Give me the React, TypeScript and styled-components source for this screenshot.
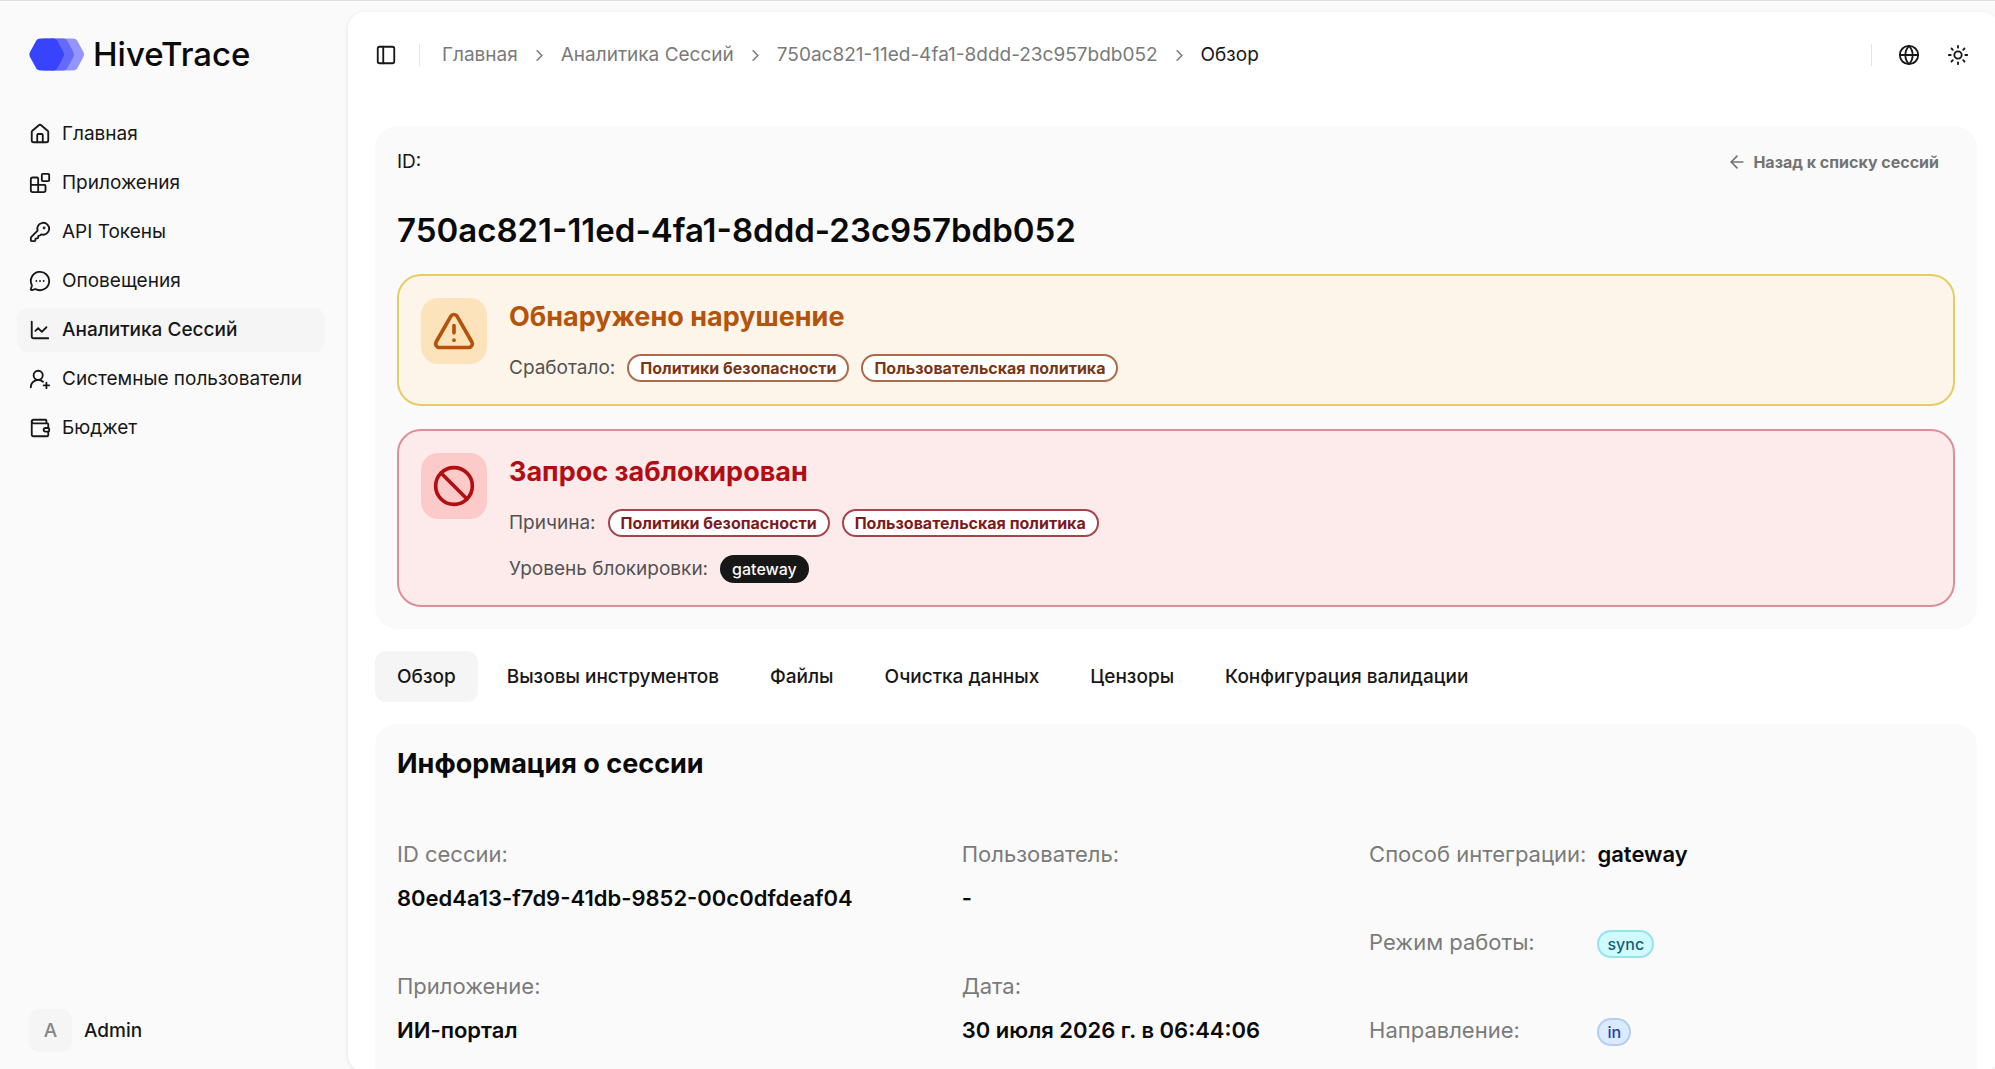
import React from "react";
import styled, { createGlobalStyle } from "styled-components";
import {
  ArrowLeft,
  Ban,
  Blocks,
  ChartLine,
  ChevronRight,
  Globe,
  House,
  KeyRound,
  MessageCircleMore,
  PanelLeft,
  Sun,
  TriangleAlert,
  UserRoundPlus,
  Wallet,
} from "lucide-react";

const GlobalStyle = createGlobalStyle`
  *, *::before, *::after { box-sizing: border-box; }
  body {
    margin: 0;
    background: #fafafa;
    color: #171717;
    font-family: Inter, "Noto Sans", sans-serif;
    font-size: 19px;
    line-height: 28px;
  }
  h1, h2, p, ul, ol, dl, dd { margin: 0; padding: 0; }
  ul, ol { list-style: none; }
  a { color: inherit; text-decoration: none; }
  button { font: inherit; color: inherit; background: none; border: 0; padding: 0; cursor: pointer; }
  svg { flex-shrink: 0; }
`;

const Shell = styled.div`
  display: flex;
  height: 100vh;
  overflow: hidden;
  border-top: 1px solid #dedede;
`;

const Sidebar = styled.aside`
  display: flex;
  flex-direction: column;
  flex: 0 0 348px;
  padding: 31px 23px 17px 17px;
`;

const Brand = styled.a`
  display: flex;
  align-items: center;
  gap: 9px;
  height: 44px;
  margin: 0 12px 36px;
  color: #0a0a0a;
  font-size: 33px;
  font-weight: 500;
  line-height: 44px;
`;

const NavList = styled.ul`
  display: flex;
  flex-direction: column;
  gap: 5px;
`;

const NavLink = styled.a<{ $active?: boolean }>`
  display: flex;
  align-items: center;
  gap: 11px;
  height: 44px;
  padding: 0 12px;
  border-radius: 11px;
  white-space: nowrap;
  font-weight: ${(p) => (p.$active ? 500 : 400)};
  background: ${(p) => (p.$active ? "#f5f5f5" : "transparent")};
`;

const Account = styled.button`
  display: flex;
  align-items: center;
  gap: 12px;
  margin-top: auto;
  padding: 0 12px;
  font-weight: 500;
`;

const Avatar = styled.span`
  display: grid;
  place-items: center;
  width: 43px;
  height: 43px;
  border-radius: 11px;
  background: #f5f5f5;
  color: #858585;
`;

const Panel = styled.main`
  flex: 1;
  min-width: 0;
  height: calc(100vh - 9px);
  margin: 11px -4px 0 0;
  overflow: hidden;
  border-radius: 17px;
  background: #fff;
  box-shadow: 0 1px 4px rgba(0, 0, 0, 0.1);
`;

const TopBar = styled.header`
  display: flex;
  align-items: center;
  height: 86px;
  padding: 0 17px 0 27px;
`;

const IconButton = styled.button`
  display: grid;
  place-items: center;
  width: 49px;
  height: 44px;
`;

const ToggleButton = styled(IconButton)`
  width: 22px;
`;

const Divider = styled.span`
  width: 1px;
  height: 22px;
  background: #e5e5e5;
`;

const Breadcrumb = styled.nav`
  display: flex;
  align-items: center;
  gap: 22px;
  margin-left: 22px;
`;

const Crumbs = styled.ol`
  display: flex;
  align-items: center;
  gap: 12px;
  color: #7a7a7a;
`;

const Crumb = styled.li<{ $current?: boolean }>`
  display: flex;
  align-items: center;
  gap: 12px;
  color: ${(p) => (p.$current ? "#171717" : "inherit")};
`;

const Actions = styled.div`
  display: flex;
  align-items: center;
  margin-left: auto;
`;

const GlobeButton = styled(IconButton)`
  margin-left: 12px;
`;

const Content = styled.div`
  display: flex;
  flex-direction: column;
  gap: 22px;
  padding: 28px 22px 0 27px;
`;

const Card = styled.section`
  padding: 22px;
  border-radius: 22px;
  background: #fafafa;
`;

const InfoCard = styled(Card)`
  padding-bottom: 66px;
`;

const CardTop = styled.div`
  display: flex;
  justify-content: space-between;
  align-items: center;
  height: 28px;
  padding-right: 16px;
`;

const BackLink = styled.a`
  display: flex;
  align-items: center;
  gap: 6px;
  color: #737373;
  font-size: 16px;
  font-weight: 700;
`;

const SessionTitle = styled.h1`
  margin: 32px 0 22px;
  color: #0a0a0a;
  font-size: 33px;
  font-weight: 600;
  line-height: 44px;
`;

const Alerts = styled.div`
  display: flex;
  flex-direction: column;
  gap: 23px;
`;

const tones = {
  warning: { line: "#e6cc62", fill: "#fdf5e9", tile: "#fde3bb", title: "#b45309", badge: "#7a3614", badgeLine: "#b06a48" },
  danger: { line: "#dc8f98", fill: "#fdebec", tile: "#fdcaca", title: "#b30d12", badge: "#7d1a1d", badgeLine: "#a8434b" },
};
type Tone = keyof typeof tones;

const Alert = styled.div<{ $tone: Tone }>`
  display: flex;
  align-items: flex-start;
  gap: 22px;
  padding: 22px;
  border: 2px solid ${(p) => tones[p.$tone].line};
  border-radius: 24px;
  background: ${(p) => tones[p.$tone].fill};
`;

const AlertIcon = styled.div<{ $tone: Tone }>`
  display: grid;
  place-items: center;
  width: 66px;
  height: 66px;
  border-radius: 17px;
  background: ${(p) => tones[p.$tone].tile};
  color: ${(p) => tones[p.$tone].title};
`;

const AlertBody = styled.div`
  display: flex;
  flex-direction: column;
  gap: 18px;
`;

const AlertTitle = styled.h2<{ $tone: Tone }>`
  color: ${(p) => tones[p.$tone].title};
  font-size: 27px;
  font-weight: 700;
  line-height: 38px;
`;

const AlertRow = styled.div`
  display: flex;
  align-items: center;
  gap: 12px;
  height: 28px;
  color: #525252;
`;

const Pill = styled.span`
  display: inline-flex;
  align-items: center;
  height: 28px;
  padding: 0 12px;
  border-radius: 14px;
  font-size: 16px;
  font-weight: 500;
  line-height: 22px;
`;

const TonePill = styled(Pill)<{ $tone: Tone }>`
  padding: 0 11px;
  border: 2px solid ${(p) => tones[p.$tone].badgeLine};
  background: #fff;
  color: ${(p) => tones[p.$tone].badge};
  font-weight: 700;
`;

const DarkPill = styled(Pill)`
  background: #171717;
  color: #fafafa;
`;

const hues = {
  cyan: { fill: "#cffafe", line: "#94e4ee", text: "#155e75" },
  blue: { fill: "#dbeafe", line: "#b4cdf3", text: "#1e40af" },
};

const HuePill = styled(Pill)<{ $hue: keyof typeof hues }>`
  margin-top: 3px;
  padding: 0 8px;
  border: 2px solid ${(p) => hues[p.$hue].line};
  background: ${(p) => hues[p.$hue].fill};
  color: ${(p) => hues[p.$hue].text};
`;

const Tabs = styled.div`
  display: flex;
  gap: 7px;
`;

const Tab = styled.button<{ $active?: boolean }>`
  height: 51px;
  padding: 0 22px;
  border-radius: 11px;
  font-weight: 500;
  background: ${(p) => (p.$active ? "#f5f5f5" : "transparent")};
`;

const SectionTitle = styled.h2`
  color: #0a0a0a;
  font-size: 27px;
  font-weight: 700;
  line-height: 36px;
`;

const InfoColumns = styled.div`
  display: flex;
  gap: 109px;
  margin-top: 55px;
  font-size: 22px;
  line-height: 34px;
  white-space: nowrap;
`;

const FieldList = styled.dl`
  display: flex;
  flex-direction: column;
  gap: 54px;
`;

const Field = styled.div`
  display: flex;
  flex-direction: column;
  gap: 10px;
`;

const PairList = styled.dl`
  display: grid;
  grid-template-columns: auto auto;
  align-content: start;
  gap: 54px 11px;
`;

const Term = styled.dt`
  color: #7a7a7a;
`;

const Value = styled.dd`
  display: flex;
  align-items: center;
  height: 34px;
  color: #0a0a0a;
  font-weight: 600;
`;

const Logo = () => (
  <svg width="55" height="33" viewBox="0 0 55 33" aria-hidden="true">
    <path d="M22 0.5h22q3 0 4.200 2l6.200 11.500q1.200 2.500 0 5l-6.200 11.500q-1.200 2-4.200 2H22z" fill="#9496ff" />
    <path d="M14 0.5h20q3 0 4.200 2l6.200 11.500q1.200 2.500 0 5l-6.200 11.500q-1.200 2-4.200 2H14z" fill="#666afc" />
    <path d="M11.500 0.5h12.500q3 0 4.200 2l6.200 11.500q1.200 2.500 0 5l-6.200 11.500q-1.200 2-4.200 2H11.500q-3 0-4.200-2L1 19q-1.200-2.500 0-5L7.300 2.500q1.200-2 4.200-2z" fill="#3743fc" />
  </svg>
);

const navItems = [
  { label: "Главная", icon: House },
  { label: "Приложения", icon: Blocks },
  { label: "API Токены", icon: KeyRound },
  { label: "Оповещения", icon: MessageCircleMore },
  { label: "Аналитика Сессий", icon: ChartLine, active: true },
  { label: "Системные пользователи", icon: UserRoundPlus },
  { label: "Бюджет", icon: Wallet },
];

const crumbs = ["Главная", "Аналитика Сессий", "750ac821-11ed-4fa1-8ddd-23c957bdb052", "Обзор"];
const tabs = ["Обзор", "Вызовы инструментов", "Файлы", "Очистка данных", "Цензоры", "Конфигурация валидации"];
const policies = ["Политики безопасности", "Пользовательская политика"];

const fieldColumns = [
  [
    ["ID сессии:", "80ed4a13-f7d9-41db-9852-00c0dfdeaf04"],
    ["Приложение:", "ИИ-портал"],
  ],
  [
    ["Пользователь:", "-"],
    ["Дата:", "30 июля 2026 г. в 06:44:06"],
  ],
];

const PolicyRow = ({ label, tone }: { label: string; tone: Tone }) => (
  <AlertRow>
    <span>{label}</span>
    {policies.map((name) => (
      <TonePill key={name} $tone={tone}>{name}</TonePill>
    ))}
  </AlertRow>
);

export default function App() {
  return (
    <>
      <GlobalStyle />
      <Shell>
        <Sidebar>
          <Brand href="#">
            <Logo />
            <span>HiveTrace</span>
          </Brand>
          <nav>
            <NavList>
              {navItems.map(({ label, icon: Icon, active }) => (
                <li key={label}>
                  <NavLink href="#" $active={active}>
                    <Icon size={22} />
                    <span>{label}</span>
                  </NavLink>
                </li>
              ))}
            </NavList>
          </nav>
          <Account type="button">
            <Avatar>A</Avatar>
            <span>Admin</span>
          </Account>
        </Sidebar>

        <Panel>
          <TopBar>
            <ToggleButton type="button" aria-label="Боковая панель">
              <PanelLeft size={22} />
            </ToggleButton>
            <Breadcrumb>
              <Divider />
              <Crumbs>
                {crumbs.map((name, i) => {
                  const current = i === crumbs.length - 1;
                  return (
                    <Crumb key={name} $current={current}>
                      {i > 0 && <ChevronRight size={19} color="#7a7a7a" />}
                      {current ? <span>{name}</span> : <a href="#">{name}</a>}
                    </Crumb>
                  );
                })}
              </Crumbs>
            </Breadcrumb>
            <Actions>
              <Divider />
              <GlobeButton type="button" aria-label="Язык">
                <Globe size={22} />
              </GlobeButton>
              <IconButton type="button" aria-label="Тема">
                <Sun size={22} />
              </IconButton>
            </Actions>
          </TopBar>

          <Content>
            <Card>
              <CardTop>
                <span>ID:</span>
                <BackLink href="#">
                  <ArrowLeft size={20} />
                  <span>Назад к списку сессий</span>
                </BackLink>
              </CardTop>
              <SessionTitle>750ac821-11ed-4fa1-8ddd-23c957bdb052</SessionTitle>
              <Alerts>
                <Alert $tone="warning">
                  <AlertIcon $tone="warning">
                    <TriangleAlert size={44} />
                  </AlertIcon>
                  <AlertBody>
                    <AlertTitle $tone="warning">Обнаружено нарушение</AlertTitle>
                    <PolicyRow label="Сработало:" tone="warning" />
                  </AlertBody>
                </Alert>
                <Alert $tone="danger">
                  <AlertIcon $tone="danger">
                    <Ban size={44} />
                  </AlertIcon>
                  <AlertBody>
                    <AlertTitle $tone="danger">Запрос заблокирован</AlertTitle>
                    <PolicyRow label="Причина:" tone="danger" />
                    <AlertRow>
                      <span>Уровень блокировки:</span>
                      <DarkPill>gateway</DarkPill>
                    </AlertRow>
                  </AlertBody>
                </Alert>
              </Alerts>
            </Card>

            <Tabs role="tablist">
              {tabs.map((name, i) => (
                <Tab key={name} type="button" role="tab" aria-selected={i === 0} $active={i === 0}>
                  {name}
                </Tab>
              ))}
            </Tabs>

            <InfoCard>
              <SectionTitle>Информация о сессии</SectionTitle>
              <InfoColumns>
                {fieldColumns.map((fields, i) => (
                  <FieldList key={i}>
                    {fields.map(([term, value]) => (
                      <Field key={term}>
                        <Term>{term}</Term>
                        <Value>{value}</Value>
                      </Field>
                    ))}
                  </FieldList>
                ))}
                <PairList>
                  <Term>Способ интеграции:</Term>
                  <Value>gateway</Value>
                  <Term>Режим работы:</Term>
                  <Value><HuePill $hue="cyan">sync</HuePill></Value>
                  <Term>Направление:</Term>
                  <Value><HuePill $hue="blue">in</HuePill></Value>
                </PairList>
              </InfoColumns>
            </InfoCard>
          </Content>
        </Panel>
      </Shell>
    </>
  );
}
